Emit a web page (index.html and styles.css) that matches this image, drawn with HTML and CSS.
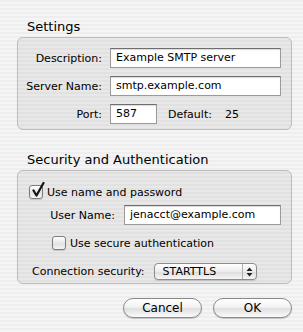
FILE: index.html
```
<!DOCTYPE html>
<html lang="en">
<head>
  <meta charset="UTF-8" />
  <title>SMTP Server Settings</title>
  <link rel="stylesheet" href="styles.css">
</head>
<body>

<div class="dialog">
  <h2 class="section-title first">Settings</h2>
  <div class="group settings">
    <label class="label">Description:</label>
    <div class="field">Example SMTP server</div>

    <label class="label">Server Name:</label>
    <div class="field">smtp.example.com</div>

    <label class="label">Port:</label>
    <div class="port-row">
      <div class="field port">587</div>
      <span class="default-label">Default:</span>
      <span class="default-value">25</span>
    </div>
  </div>

  <h2 class="section-title">Security and Authentication</h2>
  <div class="group security">
    <div class="check-row">
      <span class="checkbox">
        <svg class="tick" width="16" height="17" viewBox="0 0 16 17">
          <path d="M3.5 8.5 L6.5 13.5 L13.5 1" fill="none" stroke="#111" stroke-width="2.2" stroke-linecap="round" stroke-linejoin="round"/>
        </svg>
      </span>
      <span>Use name and password</span>
    </div>

    <div class="user-row">
      <label class="label user-label">User Name:</label>
      <div class="field user">jenacct@example.com</div>
    </div>

    <div class="check-row secure">
      <span class="checkbox"></span>
      <span>Use secure authentication</span>
    </div>

    <div class="conn-row">
      <label class="label">Connection security:</label>
      <div class="popup">
        <span class="popup-text">STARTTLS</span>
        <span class="popup-arrows">
          <svg width="7" height="10" viewBox="0 0 7 10">
            <path d="M3.5 0.5 L6.5 4 L0.5 4 Z" fill="#222"/>
            <path d="M3.5 9.5 L6.5 6 L0.5 6 Z" fill="#222"/>
          </svg>
        </span>
      </div>
    </div>
  </div>

  <div class="buttons">
    <button class="btn">Cancel</button>
    <button class="btn">OK</button>
  </div>
</div>

</body>
</html>
```

FILE: styles.css
```
html, body {
  margin: 0;
  height: 100%;
}
body {
  font-family: 'DejaVu Sans', sans-serif;
  font-size: 11px;
  color: #000;
  background: repeating-linear-gradient(#eeeeee 0 2px, #f5f5f5 2px 4px);
}
.dialog {
  padding: 0 11px 0 17px;
}
.section-title {
  margin: 22px 0 2px;
  padding-left: 10px;
  font-size: 13px;
  font-weight: normal;
  line-height: 16px;
}
.section-title.first {
  margin-top: 0;
  padding-top: 19px;
}
.group {
  border: 1px solid #bcbcbc;
  border-radius: 6px;
  background: rgba(0, 0, 0, 0.05);
}
.label {
  text-align: right;
  align-self: center;
}
.field {
  box-sizing: border-box;
  height: 20px;
  line-height: 18px;
  padding: 0 5px;
  background: #fff;
  border: 1px solid #9a9a9a;
  border-top-color: #6e6e6e;
  box-shadow: inset 0 1px 1px rgba(0, 0, 0, 0.15);
  white-space: nowrap;
  overflow: hidden;
}

/* settings box */
.settings {
  display: grid;
  grid-template-columns: 84px 1fr;
  column-gap: 8px;
  row-gap: 8px;
  padding: 10px 10px 5px 0;
}
.port-row {
  display: flex;
  align-items: center;
}
.field.port {
  width: 47px;
}
.default-label {
  margin-left: 11px;
}
.default-value {
  margin-left: 13px;
}

/* security box */
.security {
  padding: 13px 10px 3px 0;
}
.check-row {
  display: flex;
  align-items: center;
  gap: 4px;
  height: 16px;
  padding-left: 11px;
}
.check-row.secure {
  margin-top: 10px;
  padding-left: 34px;
}
.checkbox {
  position: relative;
  box-sizing: border-box;
  width: 14px;
  height: 14px;
  border: 1px solid #7c7c7c;
  border-radius: 3px;
  background: linear-gradient(#ffffff, #e2e2e2 60%, #f4f4f4);
  box-shadow: 0 1px 1px rgba(0, 0, 0, 0.15);
}
.tick {
  position: absolute;
  left: 0;
  top: -4px;
}
.user-row {
  display: flex;
  align-items: center;
  margin-top: 5px;
}
.user-label {
  width: 97px;
}
.field.user {
  margin-left: 9px;
  flex: 1;
}
.conn-row {
  display: flex;
  align-items: center;
  margin-top: 12px;
  padding-left: 14px;
}
.popup {
  display: flex;
  align-items: center;
  box-sizing: border-box;
  width: 103px;
  height: 17px;
  margin-left: 9px;
  border: 1px solid #8c8c8c;
  border-radius: 4px;
  background: linear-gradient(#ffffff, #ececec 50%, #dcdcdc 51%, #f6f6f6);
  box-shadow: 0 1px 1px rgba(0, 0, 0, 0.15);
}
.popup-text {
  flex: 1;
  padding-left: 8px;
}
.popup-arrows {
  display: flex;
  align-items: center;
  justify-content: center;
  width: 13px;
  height: 100%;
  border-left: 1px solid #b0b0b0;
}

/* buttons */
.buttons {
  display: flex;
  justify-content: flex-end;
  gap: 11px;
  margin-top: 14px;
}
.btn {
  width: 79px;
  height: 20px;
  padding: 0;
  font-family: 'DejaVu Sans', sans-serif;
  font-size: 12px;
  color: #000;
  border: 1px solid #8a8a8a;
  border-radius: 10px;
  background: linear-gradient(#ffffff, #f2f2f2 45%, #e0e0e0 55%, #fafafa);
  box-shadow: 0 1px 1px rgba(0, 0, 0, 0.2);
}
```
